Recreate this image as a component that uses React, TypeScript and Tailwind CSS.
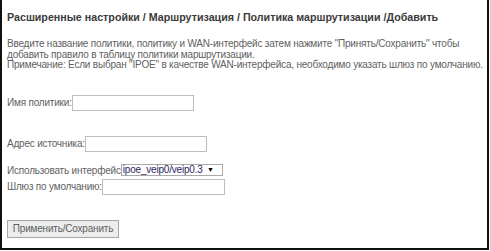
import { ChangeEvent, useState } from 'react';

export default function App() {
  const [name, setName] = useState('');
  const [source, setSource] = useState('');
  const [iface, setIface] = useState('ipoe_veip0/veip0.3');
  const [gateway, setGateway] = useState('');

  const inputCls = 'h-[16px] border border-[#bdbdbd] bg-white px-1 text-[10px] outline-none';

  return (
    <div className="w-[489px] h-[250px] overflow-hidden bg-white border-l-2 border-r-2 border-b-2 border-[#111] pl-[5px] pt-[11px] font-['Liberation_Sans',Arial,sans-serif] text-[#5f5f5f] tracking-[-0.2px]">
      <h1 className="whitespace-nowrap text-[10.7px] leading-[12px] font-bold tracking-normal text-[#3a3a3a]">
        Расширенные настройки / Маршрутизация / Политика маршрутизации /Добавить
      </h1>

      <p className="mt-[16px] whitespace-nowrap text-[10px] leading-[10.5px]">
        Введите название политики, политику и WAN-интерфейс затем нажмите "Принять/Сохранить" чтобы
        <br />
        добавить правило в таблицу политики маршрутизации.
        <br />
        Примечание: Если выбран "IPOE" в качестве WAN-интерфейса, необходимо указать шлюз по умолчанию.
      </p>

      <div className="mt-[24px] flex items-center text-[10px]">
        <span>Имя политики:</span>
        <input className={`${inputCls} w-[122px]`} value={name} onChange={(e: ChangeEvent<HTMLInputElement>) => setName(e.target.value)} />
      </div>

      <div className="mt-[25px] flex items-center text-[10px]">
        <span>Адрес источника:</span>
        <input className={`${inputCls} w-[122px]`} value={source} onChange={(e: ChangeEvent<HTMLInputElement>) => setSource(e.target.value)} />
      </div>

      <div className="mt-[11px] flex items-center text-[10px]">
        <span>Использовать интерфейс</span>
        <div className="relative w-[102px] h-[12px] border border-[#a9a9a9] bg-white">
          <select
            className="block w-full h-full appearance-none bg-transparent p-0 pl-px text-[10px] leading-[10px] text-[#2f2560] outline-none"
            value={iface}
            onChange={(e: ChangeEvent<HTMLSelectElement>) => setIface(e.target.value)}
          >
            <option>ipoe_veip0/veip0.3</option>
          </select>
          <span className="pointer-events-none absolute right-[8px] top-0 text-[7px] leading-[10px] text-black">▼</span>
        </div>
      </div>

      <div className="mt-px flex items-center text-[10px]">
        <span>Шлюз по умолчанию:</span>
        <input className={`${inputCls} w-[123px]`} value={gateway} onChange={(e: ChangeEvent<HTMLInputElement>) => setGateway(e.target.value)} />
      </div>

      <button className="mt-[25px] block h-[18px] w-[112px] border border-[#a6a6a6] bg-[#ececec] text-[10px] leading-[16px] text-[#5f5f5f]">
        Применить/Сохранить
      </button>
    </div>
  );
}
